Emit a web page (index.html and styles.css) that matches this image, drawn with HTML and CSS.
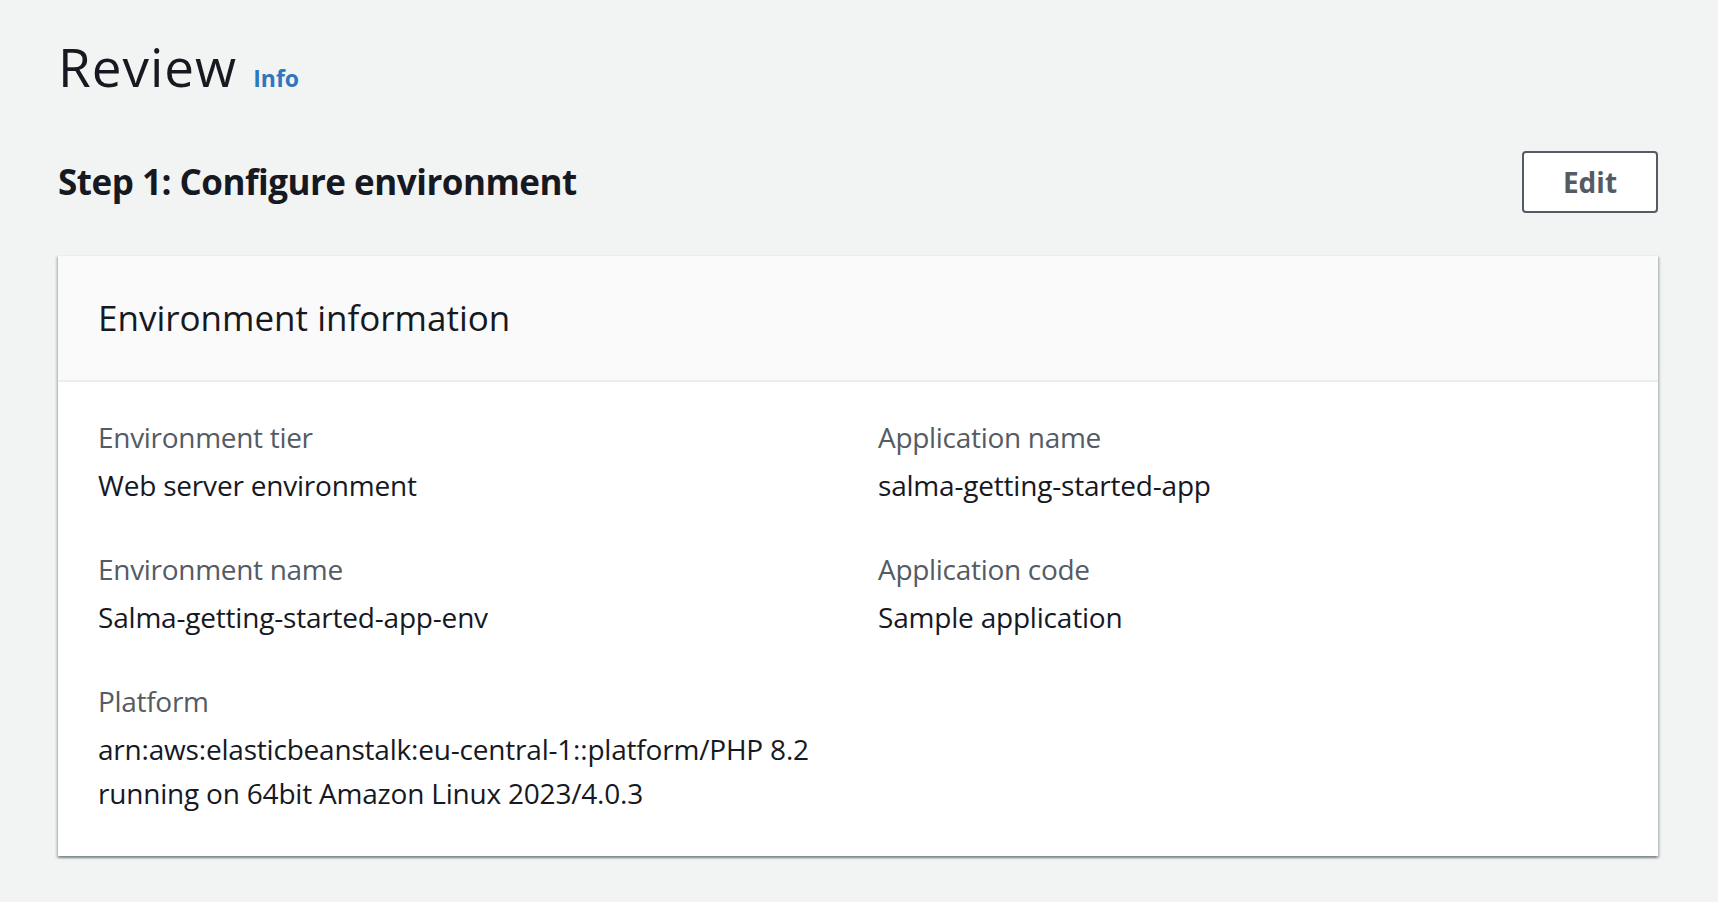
FILE: index.html
```html
<!DOCTYPE html>
<html lang="en">
<head>
<meta charset="utf-8">
<title>Review</title>
<link rel="stylesheet" href="styles.css">
</head>
<body>
<main class="page">
  <div class="page-header">
    <h1 class="title">Review</h1>
    <a class="info-link" href="#">Info</a>
  </div>

  <div class="step-header">
    <h2 class="step-title">Step 1: Configure environment</h2>
    <button class="btn" type="button">Edit</button>
  </div>

  <section class="container">
    <div class="container-header">
      <h3 class="container-title">Environment information</h3>
    </div>
    <div class="container-body">
      <div class="kv-grid">
        <div class="kv">
          <div class="kv-label">Environment tier</div>
          <div class="kv-value">Web server environment</div>
        </div>
        <div class="kv">
          <div class="kv-label">Application name</div>
          <div class="kv-value">salma-getting-started-app</div>
        </div>
        <div class="kv">
          <div class="kv-label">Environment name</div>
          <div class="kv-value">Salma-getting-started-app-env</div>
        </div>
        <div class="kv">
          <div class="kv-label">Application code</div>
          <div class="kv-value">Sample application</div>
        </div>
        <div class="kv">
          <div class="kv-label">Platform</div>
          <div class="kv-value">arn:aws:elasticbeanstalk:eu-central-1::platform/PHP 8.2<br>running on 64bit Amazon Linux 2023/4.0.3</div>
        </div>
      </div>
    </div>
  </section>
</main>
</body>
</html>
```

FILE: styles.css
```css
* {
  box-sizing: border-box;
}

html, body {
  margin: 0;
  padding: 0;
  background: #f2f3f3;
}

body {
  font-family: "Open Sans", "Noto Sans", "Liberation Sans", sans-serif;
  color: #16191f;
  font-size: 28px;
  line-height: 44px;
}

.page {
  padding: 35px 60px 40px 58px;
}

.page-header {
  display: flex;
  align-items: baseline;
  gap: 16px;
}

.title {
  margin: 0;
  font-size: 53px;
  line-height: 64px;
  font-weight: 400;
  letter-spacing: 1px;
  color: #16191f;
}

.info-link {
  font-size: 23px;
  line-height: 28px;
  font-weight: 700;
  color: #2f76c0;
  text-decoration: none;
}

.step-header {
  display: flex;
  align-items: center;
  justify-content: space-between;
  margin-top: 52px;
}

.step-title {
  margin: 0;
  font-size: 35px;
  line-height: 44px;
  font-weight: 700;
  letter-spacing: -0.5px;
  color: #16191f;
}

.btn {
  width: 136px;
  height: 62px;
  border: 2px solid #545b64;
  border-radius: 4px;
  background: #ffffff;
  color: #545b64;
  font-family: inherit;
  font-size: 28px;
  font-weight: 700;
  line-height: 40px;
  padding: 0;
  cursor: pointer;
}

.container {
  margin-top: 42px;
  background: #ffffff;
  border-top: 1px solid #eaeded;
  box-shadow: 0 2px 2px 0 rgba(0, 28, 36, 0.3),
              2px 2px 2px 0 rgba(0, 28, 36, 0.15),
              -2px 2px 2px 0 rgba(0, 28, 36, 0.15);
}

.container-header {
  background: #fafafa;
  border-bottom: 2px solid #eaeded;
  padding: 38px 40px 38px 40px;
}

.container-title {
  margin: 0;
  font-size: 35px;
  line-height: 48px;
  font-weight: 400;
  color: #16191f;
}

.container-body {
  padding: 33px 40px 41px 40px;
}

.kv-grid {
  display: grid;
  grid-template-columns: 1fr 1fr;
  column-gap: 40px;
  row-gap: 40px;
}

.kv-label {
  color: #545b64;
  margin-bottom: 4px;
  letter-spacing: -0.3px;
}

.kv-value {
  color: #16191f;
  letter-spacing: -0.2px;
}
```
